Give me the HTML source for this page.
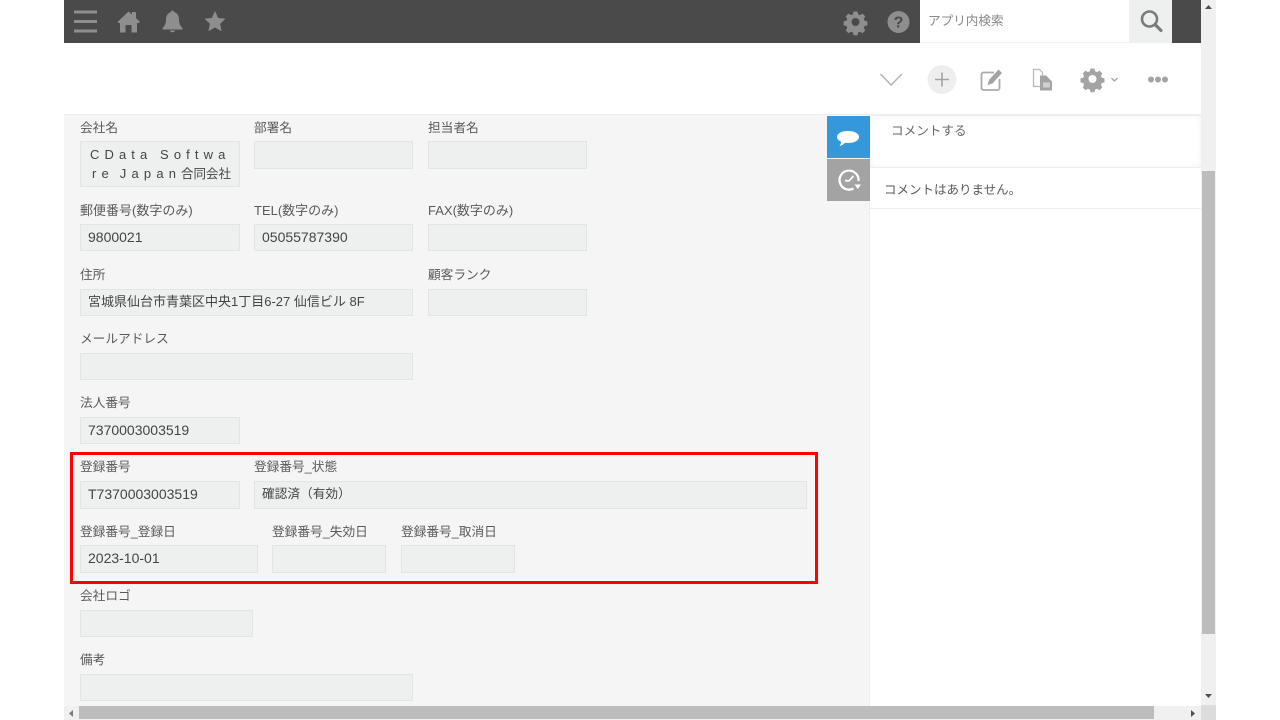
<!DOCTYPE html>
<html lang="ja">
<head>
<meta charset="utf-8">
<title>kintone</title>
<style>
html,body{margin:0;padding:0;width:1280px;height:720px;overflow:hidden;background:#fff}
body{position:relative;font-family:"Liberation Sans","Noto Sans CJK JP",sans-serif;color:#555;font-size:13px}
div,span{position:absolute;box-sizing:border-box}
.l{font-size:12.7px;line-height:18px;white-space:nowrap;color:#5a5a5a}
.m{font-size:13px}
.f{background:#eef0f0;border:1px solid #e3e5e5;font-size:14px;line-height:25px;padding-left:7px;color:#444;white-space:nowrap;height:27px}
.t{height:28px;line-height:24px}
.j{font-size:12.7px}
svg{position:absolute;overflow:visible}
</style>
</head>
<body>
<div style="left:64px;top:0;width:1137px;height:43px;background:#4a4a4a"></div>

<svg style="left:64px;top:0" width="200" height="43" fill="#8e8e8e">
<rect x="10" y="10.500" width="23" height="3"/><rect x="10" y="20" width="23" height="3"/><rect x="10" y="29.500" width="23" height="3"/>
<path d="M54 21.500L64.500 11.500 68 14.500V12H72V18L75.500 21.500V23H73V32.500H67.500V25H61.500V32.500H56V23H54Z"/>
<path d="M108.500 10.500c1 0 1.500.7 1.500 1.500 3.500 1 5 4 5 7.500 0 4 1.500 7 3.500 8.500v1.500h-20V28c2-1.500 3.500-4.500 3.500-8.500 0-3.500 1.500-6.500 5-7.500 0-.8.500-1.500 1.500-1.500zM106 30.500h5c0 1-1 1.800-2.500 1.800s-2.500-.8-2.500-1.800z"/>
<path d="M151 11l3.200 7 7.300.8-5.400 5 1.500 7.500-6.600-3.800-6.600 3.800 1.500-7.500-5.400-5 7.300-.8z"/>
</svg>

<svg style="left:840px;top:0.500px" width="80" height="43">
<g fill="#8e8e8e">
<path fill-rule="evenodd" d="M13.500 10.500h4l.6 2.800 2 .8 2.400-1.500 2.800 2.800-1.500 2.400.8 2 2.800.6v4l-2.800.6-.8 2 1.500 2.400-2.800 2.800-2.400-1.500-2 .8-.6 2.800h-4l-.6-2.800-2-.8-2.400 1.500-2.800-2.800 1.500-2.400-.8-2-2.800-.6v-4l2.800-.6.8-2-1.500-2.400 2.800-2.800 2.400 1.500 2-.8zM15.500 17a4 4 0 100 8 4 4 0 000-8z"/>
<circle cx="58.500" cy="21" r="11"/>
</g>
<text x="58.500" y="26.500" font-family="Liberation Sans" font-weight="bold" font-size="16" text-anchor="middle" fill="#4a4a4a">?</text>
</svg>

<div style="left:920px;top:0;width:209px;height:43px;background:#fff;border-bottom:1px solid #f2f2f2;font-size:12.6px;line-height:42px;padding-left:8px;color:#888">アプリ内検索</div>
<div style="left:1129px;top:0;width:43px;height:43px;background:#eef0f0"></div>
<svg style="left:1129px;top:0" width="43" height="43" fill="none" stroke="#7b7b7b" stroke-width="2.600">
<circle cx="20.500" cy="19" r="7.500"/><path d="M26 24.500L32 30.500" stroke-width="3.200" stroke-linecap="round"/>
</svg>

<svg style="left:870px;top:60px" width="310" height="40" fill="none" stroke="#b4b4b4">
<path d="M10.500 14l10.500 11 11-11" stroke-width="1.500"/>
<circle cx="72" cy="19.500" r="14.500" fill="#eeeeee" stroke="none"/>
<path d="M72 12.500v14M65 19.500h14" stroke="#a3a3a3" stroke-width="1.600"/>
<path d="M124 12.500h-10.500a2 2 0 00-2 2v13.500a2 2 0 002 2h14a2 2 0 002-2V19" stroke="#ababab" stroke-width="1.800"/>
<path d="M117.500 25l1.500-5 9.500-10.500 3.500 3.500-9.500 10.500z" fill="#a3a3a3" stroke="none"/>
<path d="M163.500 9.500h6l3 3v14h-9z" fill="#fff" stroke="#b8b8b8" stroke-width="1.200"/>
<path d="M170 15.500h6l6 6v9h-12z" fill="#a3a3a3" stroke="none"/>
<rect x="173" y="22.500" width="7" height="5" fill="#d0d0d0" stroke="none"/>
<path fill-rule="evenodd" d="M220.500 8.500h4l.6 2.800 2 .8 2.400-1.500 2.800 2.800-1.300 2.400.8 2 2.700.6v4l-2.700.6-.8 2 1.300 2.400-2.800 2.800-2.400-1.500-2 .8-.6 2.800h-4l-.6-2.800-2-.8-2.400 1.500-2.800-2.800 1.300-2.400-.8-2-2.700-.6v-4l2.700-.6.8-2-1.300-2.400 2.800-2.800 2.400 1.500 2-.8zM222.500 15a4 4 0 100 8 4 4 0 000-8z" fill="#a3a3a3" stroke="none"/>
<path d="M241.500 18l3 3 3-3" stroke="#a3a3a3" stroke-width="1.300"/>
<g fill="#a3a3a3" stroke="none"><circle cx="281" cy="19.500" r="3"/><circle cx="288" cy="19.500" r="3"/><circle cx="295" cy="19.500" r="3"/></g>
</svg>

<div style="left:64px;top:115px;width:806px;height:591px;background:#f5f5f5"></div>
<div style="left:64px;top:114px;width:1137px;height:1px;background:#eeeeee"></div>

<div class="l" style="left:80px;top:119px">会社名</div>
<div class="f" style="left:80px;top:141px;width:160px;height:46px"><span style="left:9px;top:3px;line-height:20px;font-size:13px;letter-spacing:5.100px;word-spacing:-1px">CData Softwa</span><span style="left:11px;top:22px;line-height:20px;font-size:13px;letter-spacing:5.200px;word-spacing:-3px">re Japan</span><span style="left:100px;top:22px;line-height:20px;font-size:12.500px">合同会社</span></div>
<div class="l" style="left:254px;top:119px">部署名</div>
<div class="f t" style="left:254px;top:141px;width:159px"></div>
<div class="l" style="left:428px;top:119px">担当者名</div>
<div class="f t" style="left:428px;top:141px;width:159px"></div>

<div class="l m" style="left:80px;top:202px">郵便番号(数字のみ)</div>
<div class="f" style="left:80px;top:224px;width:160px">9800021</div>
<div class="l m" style="left:254px;top:202px">TEL(数字のみ)</div>
<div class="f" style="left:254px;top:224px;width:159px">05055787390</div>
<div class="l m" style="left:428px;top:202px">FAX(数字のみ)</div>
<div class="f" style="left:428px;top:224px;width:159px"></div>

<div class="l" style="left:80px;top:266px">住所</div>
<div class="f j" style="left:80px;top:289px;width:333px;font-size:13px;line-height:24px">宮城県仙台市青葉区中央1丁目6-27 仙信ビル 8F</div>
<div class="l" style="left:428px;top:266px">顧客ランク</div>
<div class="f" style="left:428px;top:289px;width:159px"></div>

<div class="l" style="left:80px;top:330px">メールアドレス</div>
<div class="f" style="left:80px;top:353px;width:333px"></div>

<div class="l" style="left:80px;top:394px">法人番号</div>
<div class="f" style="left:80px;top:417px;width:160px;line-height:24px">7370003003519</div>

<div class="l" style="left:80px;top:458px">登録番号</div>
<div class="f t" style="left:80px;top:481px;width:160px">T7370003003519</div>
<div class="l" style="left:254px;top:458px">登録番号_状態</div>
<div class="f t j" style="left:254px;top:481px;width:553px">確認済（有効）</div>

<div class="l" style="left:80px;top:523px">登録番号_登録日</div>
<div class="f t" style="left:80px;top:545px;width:178px">2023-10-01</div>
<div class="l" style="left:272px;top:523px">登録番号_失効日</div>
<div class="f t" style="left:272px;top:545px;width:114px"></div>
<div class="l" style="left:401px;top:523px">登録番号_取消日</div>
<div class="f t" style="left:401px;top:545px;width:114px"></div>

<div class="l" style="left:80px;top:587px">会社ロゴ</div>
<div class="f" style="left:80px;top:610px;width:173px"></div>

<div class="l" style="left:80px;top:651px">備考</div>
<div class="f" style="left:80px;top:674px;width:333px"></div>

<div style="left:70px;top:452px;width:748px;height:132px;border:3px solid #f00"></div>

<div style="left:869px;top:115px;width:332px;height:591px;background:#fff;border-left:1px solid #eeeeee"></div>
<div style="left:870px;top:115px;width:331px;height:52px;background:#fff;box-shadow:inset 0 0 7px #f3f3f3;border-top:1px solid #eee"></div>
<div style="left:870px;top:167px;width:331px;height:1px;background:#eeeeee"></div>
<div style="left:891px;top:122px;font-size:12.600px;line-height:18px;color:#666;white-space:nowrap">コメントする</div>
<div style="left:884px;top:181px;font-size:12.500px;line-height:18px;color:#5a5a5a;white-space:nowrap">コメントはありません。</div>
<div style="left:870px;top:208px;width:331px;height:1px;background:#eeeeee"></div>

<div style="left:827px;top:116px;width:43px;height:42px;background:#3498db"></div>
<svg style="left:827px;top:116px" width="43" height="43" fill="#fff">
<path d="M21 15c6 0 11 2.300 11 6s-5 6-11 6c-1 0-2 0-3-.2-1.500 1.700-3.500 3-5.700 3.200 1-1 1.700-2.500 1.900-4.300-2.700-1.100-4.200-2.700-4.200-4.700 0-3.700 5-6 11-6z"/>
</svg>
<div style="left:827px;top:159px;width:43px;height:42px;background:#a3a3a3"></div>
<svg style="left:827px;top:159px" width="43" height="43" fill="none" stroke="#fff" stroke-width="2.300">
<path d="M26.500 29.500A9.500 9.500 0 1131.500 22"/><path d="M22 22l4.500-5M22 22l-4-.5" stroke-width="1.700"/><path d="M27.500 25.500h6.500l-3.200 4.500z" fill="#fff" stroke="none"/>
</svg>

<div style="left:1201px;top:0;width:15px;height:706px;background:#f0f0f0"></div>
<div style="left:1202px;top:171px;width:13px;height:463px;background:#bcbcbc"></div>
<svg style="left:1201px;top:0" width="15" height="706" fill="#505050"><path d="M7.500 5l3.500 4H4z"/><path d="M4 694h7l-3.500 4z"/></svg>

<div style="left:64px;top:706px;width:1137px;height:14px;background:#f0f0f0"></div>
<div style="left:79px;top:706px;width:1075px;height:13px;background:#bcbcbc"></div>
<div style="left:1201px;top:705px;width:15px;height:15px;background:#dcdcdc"></div>
<svg style="left:64px;top:706px" width="1137" height="14" fill="#7a7a7a"><path d="M5 7.500l4-3.500v7z"/><path fill="#505050" d="M1127 4l4 3.500-4 3.500z"/></svg>
</body>
</html>
